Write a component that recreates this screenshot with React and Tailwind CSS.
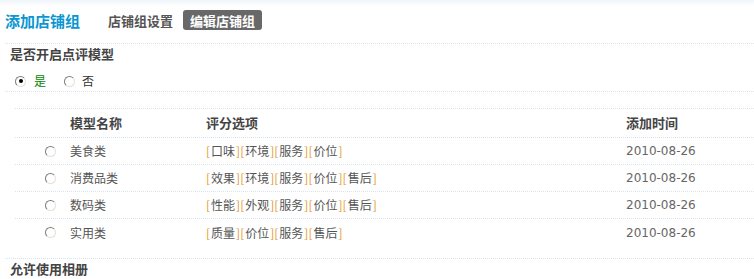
import React from 'react'

const rows = [
  { name: '美食类', opts: ['口味', '环境', '服务', '价位'], date: '2010-08-26' },
  { name: '消费品类', opts: ['效果', '环境', '服务', '价位', '售后'], date: '2010-08-26' },
  { name: '数码类', opts: ['性能', '外观', '服务', '价位', '售后'], date: '2010-08-26' },
  { name: '实用类', opts: ['质量', '价位', '服务', '售后'], date: '2010-08-26' },
]

function Radio({ checked }) {
  return (
    <span className="inline-flex w-[11px] h-[11px] rounded-full items-center justify-center bg-white border border-t-[#7d7d7d] border-l-[#7d7d7d] border-b-[#e2e2d6] border-r-[#e2e2d6]">
      {checked && <span className="w-[4px] h-[4px] rounded-full bg-black" />}
    </span>
  )
}

export default function App() {
  const cjk = { fontFamily: '"Noto Sans CJK SC", "DejaVu Sans", sans-serif' }

  return (
    <div className="w-[754px] h-[279px] bg-white overflow-hidden text-[12px] text-[#555]" style={cjk}>
      <div className="h-[6px] bg-gradient-to-b from-[#eef5fa] to-white" />

      {/* title + tabs */}
      <div className="flex items-center h-[28px] pl-[5px]">
        <h1 className="text-[15px] font-bold text-[#0a96d0] leading-none">添加店铺组</h1>
        <span className="ml-[28px] text-[13px] font-bold text-[#555] leading-none">店铺组设置</span>
        <span className="ml-[10px] h-[20px] px-[7px] flex items-center rounded-[3px] bg-[#686868] text-white text-[13px] font-bold leading-none">
          编辑店铺组
        </span>
      </div>

      <div className="ml-[5px] mt-[9px] border-t border-dotted border-[#d6e5ee]" />

      <div className="pl-[10px] h-[18px] flex items-center text-[13px] font-bold text-[#444] leading-none">是否开启点评模型</div>
      <div className="flex items-center h-[29px] pl-[15px] pt-[9px]">
        <Radio checked />
        <span className="ml-[8px] text-[#080]">是</span>
        <span className="ml-[18px] flex"><Radio /></span>
        <span className="ml-[7px] text-[#333]">否</span>
      </div>
      <div className="ml-[5px] border-t border-dotted border-[#d6e5ee]" />

      {/* model table */}
      <div className="ml-[15px] mt-[16px] border-t border-dotted border-[#d6e5ee]">
        <div className="flex items-center h-[29px] border-b border-dotted border-[#d6e5ee] text-[13px] font-bold text-[#444]">
          <div className="w-[55px]" />
          <div className="w-[136px]">模型名称</div>
          <div className="w-[420px]">评分选项</div>
          <div>添加时间</div>
        </div>
        {rows.map((r, i) => (
          <div
            key={r.name}
            className={`flex items-center h-[27px] ${i < rows.length - 1 ? 'border-b border-dotted border-[#d6e5ee]' : ''}`}
          >
            <div className="w-[55px] pl-[30px] flex items-center">
              <Radio />
            </div>
            <div className="w-[136px]">{r.name}</div>
            <div className="w-[420px]">
              {r.opts.map((o) => (
                <span key={o}>
                  <span className="text-[#e09a2e] mr-[1px]">[</span>
                  {o}
                  <span className="text-[#e09a2e] ml-[1px]">]</span>
                </span>
              ))}
            </div>
            <div className="text-[#666]" style={{ fontFamily: '"DejaVu Sans", sans-serif' }}>{r.date}</div>
          </div>
        ))}
      </div>

      <div className="ml-[5px] mt-[12px] border-t border-dotted border-[#d6e5ee]" />
      <div className="pl-[10px] h-[18px] flex items-center text-[13px] font-bold text-[#444] leading-none">允许使用相册</div>
    </div>
  )
}
